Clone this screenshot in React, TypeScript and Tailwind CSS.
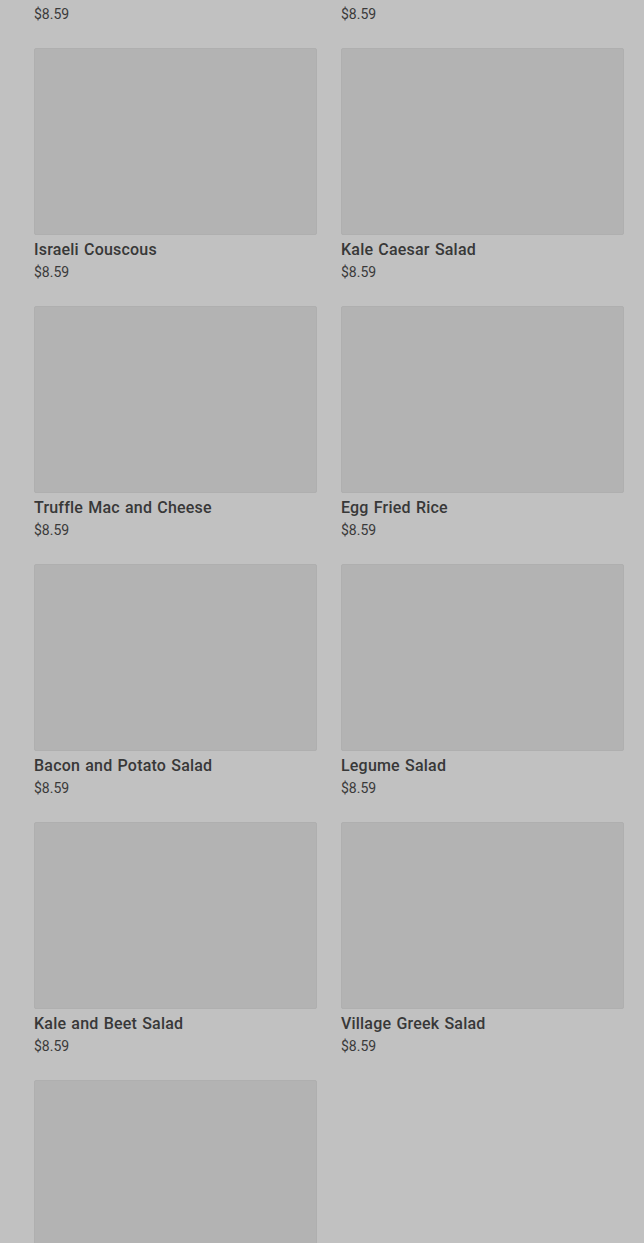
import React from "react";

interface MenuItem {
  name: string;
  price: string;
}

const items: MenuItem[] = [
  { name: "Grilled Chicken Wrap", price: "$8.59" },
  { name: "Spicy Tuna Poke", price: "$8.59" },
  { name: "Israeli Couscous", price: "$8.59" },
  { name: "Kale Caesar Salad", price: "$8.59" },
  { name: "Truffle Mac and Cheese", price: "$8.59" },
  { name: "Egg Fried Rice", price: "$8.59" },
  { name: "Bacon and Potato Salad", price: "$8.59" },
  { name: "Legume Salad", price: "$8.59" },
  { name: "Kale and Beet Salad", price: "$8.59" },
  { name: "Village Greek Salad", price: "$8.59" },
  { name: "Quinoa Power Bowl", price: "$8.59" },
];

const ItemCard = ({ item }: { item: MenuItem }) => (
  <div className="flex flex-col">
    <div className="h-[187px] w-full rounded-[2px] bg-[#b3b3b3] border border-[#afafaf]" />
    <p className="mt-[3px] text-[16px] leading-6 font-medium tracking-[0.2px] [word-spacing:1px] text-[#383838]">
      {item.name}
    </p>
    <p className="text-[14px] leading-5 text-[#3a3a3a]">{item.price}</p>
  </div>
);

export default function App() {
  return (
    <div
      className="h-[1243px] overflow-hidden bg-[#c1c1c1]"
      style={{ fontFamily: "Roboto, 'Liberation Sans', sans-serif" }}
    >
      <div className="mt-[-210px] pl-[34px] pr-[20px] grid grid-cols-2 gap-x-6 gap-y-6">
        {items.map((item, i) => (
          <ItemCard key={i} item={item} />
        ))}
      </div>
    </div>
  );
}
